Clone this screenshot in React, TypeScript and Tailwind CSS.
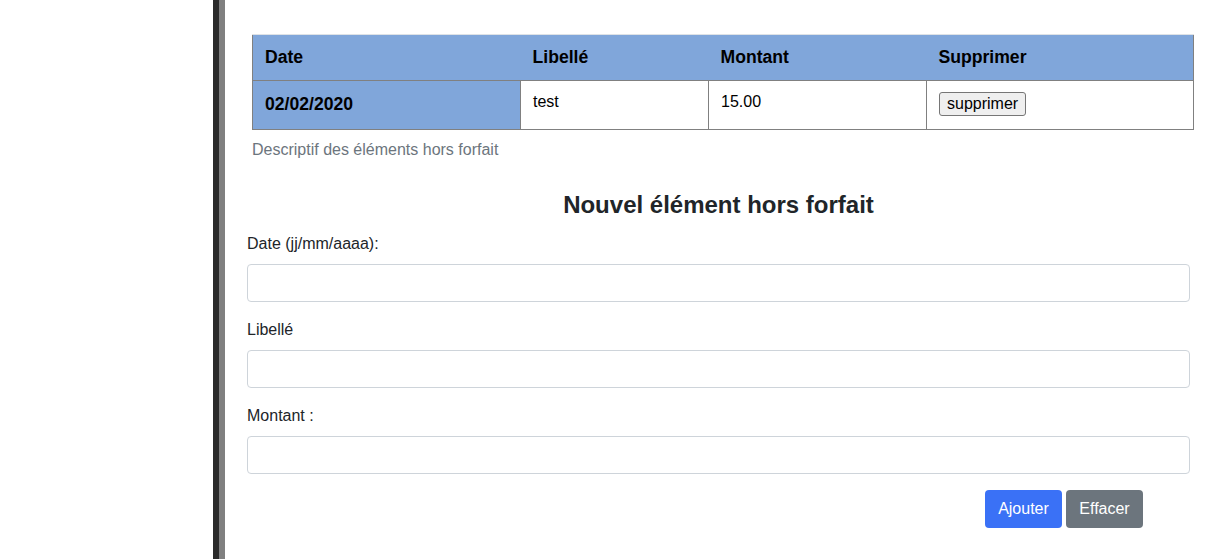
import React from "react"

const font = { fontFamily: '"Liberation Sans", Arial, sans-serif' }

function Field({ label }: { label: string }) {
  return (
    <div className="mb-4">
      <label className="block mb-2 leading-6 text-[#212529]">{label}</label>
      <input
        type="text"
        className="block w-full h-[38px] px-3 border border-[#ced4da] rounded-[4px] bg-white"
      />
    </div>
  )
}

export default function App() {
  return (
    <div className="flex w-[1207px] h-[559px] bg-white text-[16px] text-black overflow-hidden" style={font}>
      <div className="w-[213px] shrink-0" />
      <div className="w-[6px] shrink-0 bg-[#2b2b2b]" />
      <div className="w-[6px] shrink-0 bg-[#808080]" />
      <main className="flex-1 min-w-0 pl-[22px] pr-[17px] pt-[34px]">
        <table className="w-[941px] ml-[5px] border-collapse table-fixed border border-[#808080]">
          <caption className="caption-bottom text-left text-[#6c757d] pt-[8px] pb-[28px] leading-6">
            Descriptif des éléments hors forfait
          </caption>
          <thead>
            <tr className="bg-[#80a6da] border-t border-t-[#dee2e6]">
              <th className="w-[268px] text-left font-bold text-[17.6px] px-3 h-[46px] border-b border-b-[#808080]">Date</th>
              <th className="w-[188px] text-left font-bold text-[17.6px] px-3 h-[46px] border-b border-b-[#808080]">Libellé</th>
              <th className="w-[218px] text-left font-bold text-[17.6px] px-3 h-[46px] border-b border-b-[#808080]">Montant</th>
              <th className="w-[267px] text-left font-bold text-[17.6px] px-3 h-[46px] border-b border-b-[#808080]">Supprimer</th>
            </tr>
          </thead>
          <tbody>
            <tr className="h-[49px]">
              <th className="bg-[#80a6da] text-left font-bold text-[17.6px] px-3 pb-[2px] border border-[#808080] align-middle">02/02/2020</th>
              <td className="px-3 pt-[9px] align-top border border-[#808080]">test</td>
              <td className="px-3 pt-[9px] align-top border border-[#808080]">15.00</td>
              <td className="px-3 pt-[11px] align-top border border-[#808080]">
                <button className="px-[7px] h-[24px] leading-[20px] bg-[#efefef] border border-[#767676] rounded-[3px]">
                  supprimer
                </button>
              </td>
            </tr>
          </tbody>
        </table>

        <h3 className="text-center text-[24px] font-bold leading-[29px] text-[#212529] mb-[13px]">
          Nouvel élément hors forfait
        </h3>

        <form>
          <Field label="Date (jj/mm/aaaa):" />
          <Field label="Libellé" />
          <Field label="Montant :" />
          <div className="flex justify-end gap-1 pr-[47px]">
            <button type="button" className="h-[38px] w-[77px] rounded-[4px] bg-[#3a71f6] text-white">
              Ajouter
            </button>
            <button type="button" className="h-[38px] w-[77px] rounded-[4px] bg-[#6c757d] text-white">
              Effacer
            </button>
          </div>
        </form>
      </main>
    </div>
  )
}
